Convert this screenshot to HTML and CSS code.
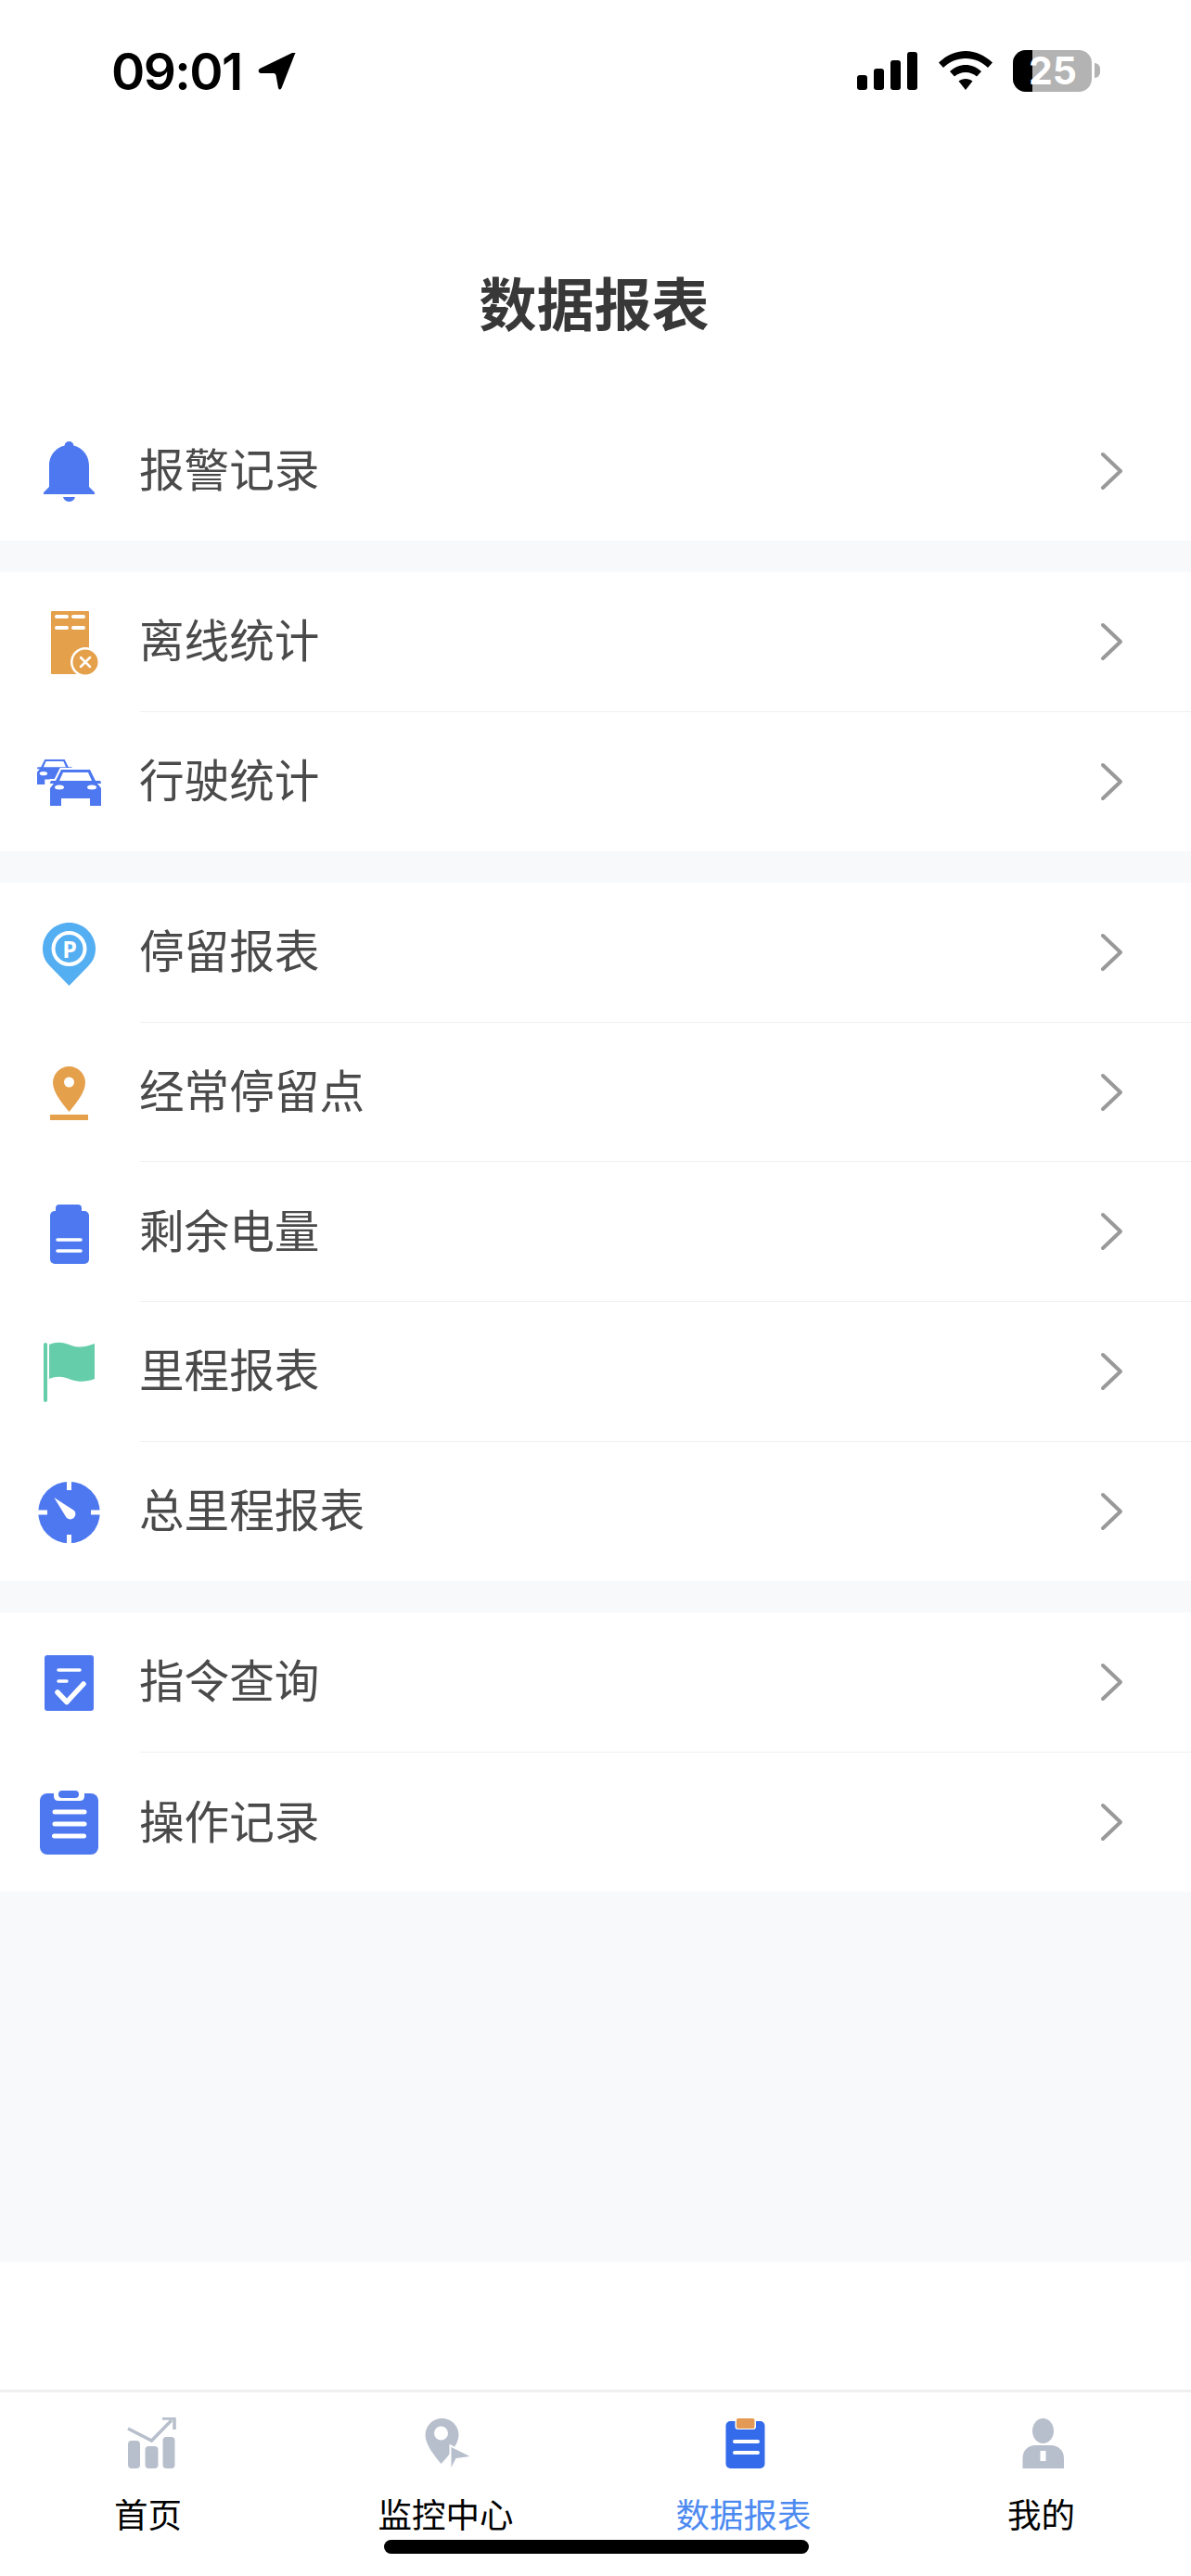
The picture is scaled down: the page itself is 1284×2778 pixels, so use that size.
FILE: index.html
```html
<!DOCTYPE html>
<html lang="zh-CN">
<head>
    <meta charset="UTF-8">
    <meta name="viewport" content="width=device-width, initial-scale=1.0">
    <title>数据报表</title>
    <link rel="stylesheet" href="styles.css">
</head>
<body>
    <div class="page">
        <div class="header">
            <div class="status">
                <div class="status-left">
                    <span class="time">09:01</span>
                    <svg class="loc-arrow" viewBox="0 0 42 40"><path d="M40 1 L25.500 38 Q23.500 41 22 38 L19.500 24 Q19 22.500 17.500 22 L2.500 22 Q-1 20 2 17 L37 0 Q42 -1 40 1 Z"/></svg>
                </div>
                <div class="status-right">
                    <svg class="signal" viewBox="0 0 65 41">
                        <rect x="0" y="25" width="11" height="16" rx="3"/>
                        <rect x="18" y="18" width="11" height="23" rx="3"/>
                        <rect x="36" y="9" width="11" height="32" rx="3"/>
                        <rect x="54" y="0" width="11" height="41" rx="3"/>
                    </svg>
                    <svg class="wifi" viewBox="0 0 58 42">
                        <path d="M29 0 C40 0 50 5 58 12.5 L53 18 C46.500 11.500 38 8 29 8 C20 8 11.500 11.500 5 18 L0 12.500 C8 5 18 0 29 0 Z"/>
                        <path d="M29 15 C35 15 41 17.500 46 22 L41 27.500 C37.500 24.500 33.500 23 29 23 C24.500 23 20.500 24.500 17 27.500 L12 22 C17 17.500 23 15 29 15 Z"/>
                        <path d="M29 30 C32 30 34.500 31 36.500 32.500 L29 42 L21.500 32.500 C23.500 31 26 30 29 30 Z"/>
                    </svg>
                    <div class="battery">
                        <div class="battery-body">
                            <div class="battery-fill"></div>
                            <span class="battery-num">25</span>
                        </div>
                        <div class="battery-nub"></div>
                    </div>
                </div>
            </div>
            <h1 class="title">数据报表</h1>
        </div>

        <div class="list">
            <div class="group">
                <div class="row">
                    <svg class="row-icon" viewBox="0 0 84 84">
                        <circle cx="42.500" cy="15" r="5" fill="#4d78f0"/>
                        <path d="M42.500 14 C31 14 21 23 21 36 V59 L15 65 V67 H70 V65 L64 59 V36 C64 23 54 14 42.500 14 Z" fill="#4d78f0"/>
                        <path d="M36 70 H49 C48 73.500 45.500 75 42.500 75 C39.500 75 37 73.500 36 70 Z" fill="#4d78f0"/>
                    </svg>
                    <div class="row-body">
                        <span class="row-label">报警记录</span>
                        <svg class="chevron" viewBox="0 0 30 44"><path d="M6 4 L25 22 L6 40"/></svg>
                    </div>
                </div>
            </div>

            <div class="group">
                <div class="row">
                    <svg class="row-icon" viewBox="0 0 84 84">
                        <rect x="23" y="9" width="41" height="68" rx="1" fill="#e5a04b"/>
                        <path d="M29 15 H40 M47 15 H58 M29 27 H40 M47 27 H58" stroke="#fff" stroke-width="4" stroke-linecap="round"/>
                        <circle cx="60" cy="64" r="16" fill="#fff"/>
                        <circle cx="60" cy="64" r="13.500" fill="#e5a04b"/>
                        <path d="M55 59 L65 69 M65 59 L55 69" stroke="#fff" stroke-width="2.500" stroke-linecap="round"/>
                    </svg>
                    <div class="row-body">
                        <span class="row-label">离线统计</span>
                        <svg class="chevron" viewBox="0 0 30 44"><path d="M6 4 L25 22 L6 40"/></svg>
                    </div>
                </div>
                <div class="row">
                    <svg class="row-icon" viewBox="0 0 84 84">
                        <g transform="translate(8 18) scale(0.69)">
                            <path d="M12 0 H43 L49 12 H54 Q55 13 55 15 H51 L55 20 V39 H43 V31 H12 V39 H0 V20 L4 15 H0 Q0 13 1 12 H6 Z" fill="#4d78f0"/>
                            <path d="M14 3 H41 L45 12 H10 Z" fill="#fff"/>
                            <ellipse cx="10" cy="22" rx="6" ry="3" fill="#fff"/>
                        </g>
                        <g transform="translate(22 29)">
                            <path d="M12 0 H43 L49 12 H54 Q55 13 55 15 H51 L55 20 V39 H43 V31 H12 V39 H0 V20 L4 15 H0 Q0 13 1 12 H6 Z" fill="#4d78f0" stroke="#fff" stroke-width="4" paint-order="stroke"/>
                            <path d="M14 3 H41 L45 12 H10 Z" fill="#fff"/>
                            <ellipse cx="10" cy="19" rx="5" ry="2.500" fill="#fff"/>
                            <ellipse cx="45" cy="19" rx="5" ry="2.500" fill="#fff"/>
                        </g>
                    </svg>
                    <div class="row-body">
                        <span class="row-label">行驶统计</span>
                        <svg class="chevron" viewBox="0 0 30 44"><path d="M6 4 L25 22 L6 40"/></svg>
                    </div>
                </div>
            </div>

            <div class="group">
                <div class="row">
                    <svg class="row-icon" viewBox="0 0 84 84">
                        <path d="M42.500 10 C58 10 71 22.500 71 38 C71 46 68 52 63 57 L42.500 78 L22 57 C17 52 14 46 14 38 C14 22.500 27 10 42.500 10 Z" fill="#54aef2"/>
                        <circle cx="42.500" cy="38" r="17" fill="none" stroke="#fff" stroke-width="4"/>
                        <text x="43" y="47.500" class="park-p">P</text>
                    </svg>
                    <div class="row-body">
                        <span class="row-label">停留报表</span>
                        <svg class="chevron" viewBox="0 0 30 44"><path d="M6 4 L25 22 L6 40"/></svg>
                    </div>
                </div>
                <div class="row">
                    <svg class="row-icon" viewBox="0 0 84 84">
                        <path d="M42.500 14 C52 14 60 22 60 31.500 C60 42 50 54 42.500 63 C35 54 25 42 25 31.500 C25 22 33 14 42.500 14 Z" fill="#e5a04b"/>
                        <circle cx="42.500" cy="31" r="5.500" fill="#fff"/>
                        <rect x="22" y="66" width="41" height="6" fill="#e5a04b"/>
                    </svg>
                    <div class="row-body">
                        <span class="row-label">经常停留点</span>
                        <svg class="chevron" viewBox="0 0 30 44"><path d="M6 4 L25 22 L6 40"/></svg>
                    </div>
                </div>
                <div class="row">
                    <svg class="row-icon" viewBox="0 0 84 84">
                        <rect x="28" y="12" width="28" height="14" rx="4" fill="#4d78f0"/>
                        <rect x="22" y="19" width="42" height="57" rx="5" fill="#4d78f0"/>
                        <path d="M30 50 H55 M30 62 H55" stroke="#fff" stroke-width="3.500" stroke-linecap="round"/>
                    </svg>
                    <div class="row-body">
                        <span class="row-label">剩余电量</span>
                        <svg class="chevron" viewBox="0 0 30 44"><path d="M6 4 L25 22 L6 40"/></svg>
                    </div>
                </div>
                <div class="row">
                    <svg class="row-icon" viewBox="0 0 84 84">
                        <rect x="15" y="11" width="4" height="64" rx="2" fill="#66cdaa"/>
                        <path d="M21 13 C30 9 38 11 45 14 C54 17 62 15 70 12 V50 C62 53 54 54 45 51 C38 48 30 46 21 50 Z" fill="#66cdaa"/>
                    </svg>
                    <div class="row-body">
                        <span class="row-label">里程报表</span>
                        <svg class="chevron" viewBox="0 0 30 44"><path d="M6 4 L25 22 L6 40"/></svg>
                    </div>
                </div>
                <div class="row">
                    <svg class="row-icon" viewBox="0 0 84 84">
                        <circle cx="42.500" cy="43" r="33.300" fill="#4d78f0"/>
                        <path d="M42.500 9 V19 M42.500 67 V77 M9 43 H19 M66 43 H76" stroke="#fff" stroke-width="5"/>
                        <path d="M26.300 27 L48 41 A5.500 5.500 0 1 1 39.500 48.500 Z" fill="#fff"/>
                    </svg>
                    <div class="row-body">
                        <span class="row-label">总里程报表</span>
                        <svg class="chevron" viewBox="0 0 30 44"><path d="M6 4 L25 22 L6 40"/></svg>
                    </div>
                </div>
            </div>

            <div class="group">
                <div class="row">
                    <svg class="row-icon" viewBox="0 0 84 84">
                        <rect x="16" y="13" width="53" height="60" rx="3" fill="#4d78f0"/>
                        <path d="M31 29 H54 M31 41 H40" stroke="#fff" stroke-width="3.500" stroke-linecap="round"/>
                        <path d="M30 53 L40 63.500 L58 44" fill="none" stroke="#fff" stroke-width="5.500" stroke-linecap="round" stroke-linejoin="round"/>
                    </svg>
                    <div class="row-body">
                        <span class="row-label">指令查询</span>
                        <svg class="chevron" viewBox="0 0 30 44"><path d="M6 4 L25 22 L6 40"/></svg>
                    </div>
                </div>
                <div class="row">
                    <svg class="row-icon" viewBox="0 0 84 84">
                        <rect x="11" y="11" width="63" height="66" rx="8" fill="#4d78f0"/>
                        <path d="M26 9 H59 V14 Q59 19 54 19 H31 Q26 19 26 14 Z" fill="#fff"/>
                        <rect x="31" y="8" width="22" height="8" rx="4" fill="#4d78f0"/>
                        <path d="M27 31 H59 M27 44 H59 M26.500 57 H58.500" stroke="#fff" stroke-width="5" stroke-linecap="round"/>
                    </svg>
                    <div class="row-body">
                        <span class="row-label">操作记录</span>
                        <svg class="chevron" viewBox="0 0 30 44"><path d="M6 4 L25 22 L6 40"/></svg>
                    </div>
                </div>
            </div>
        </div>

        <div class="spacer"></div>

        <div class="tabbar">
            <div class="tab">
                <svg class="tab-icon" viewBox="0 0 60 56">
                    <rect x="7" y="25" width="13" height="30" rx="4" fill="#b8bfcc"/>
                    <rect x="25.500" y="31" width="14" height="24" rx="4" fill="#b8bfcc"/>
                    <rect x="44.500" y="21" width="13" height="34" rx="4" fill="#b8bfcc"/>
                    <path d="M7 12 L32.500 25 L54 3" fill="none" stroke="#b8bfcc" stroke-width="3.500"/>
                    <path d="M44 1 H57 V13" fill="none" stroke="#b8bfcc" stroke-width="3.500"/>
                </svg>
                <span class="tab-label">首页</span>
            </div>
            <div class="tab">
                <svg class="tab-icon" viewBox="0 0 60 56">
                    <path d="M24.500 1 C34.500 1 42.500 9 42.500 19 C42.500 29 32 41 23.500 50 C16 41 6.500 29 6.500 19 C6.500 9 14.500 1 24.500 1 Z" fill="#b8bfcc"/>
                    <circle cx="23.500" cy="17" r="7.500" fill="#fff"/>
                    <path d="M34.500 32 L54.500 42 L39.500 44 L34.500 54 Z" fill="#b8bfcc" stroke="#fff" stroke-width="4" paint-order="stroke"/>
                </svg>
                <span class="tab-label">监控中心</span>
            </div>
            <div class="tab active">
                <svg class="tab-icon" viewBox="0 0 60 56">
                    <rect x="9.500" y="4" width="42" height="51" rx="5" fill="#336bea"/>
                    <rect x="19.500" y="0" width="22.500" height="13" rx="3" fill="#fff"/>
                    <rect x="21" y="1" width="19.500" height="11" rx="2" fill="#e39a55"/>
                    <path d="M19 26 H44 M19 38 H44" stroke="#fff" stroke-width="4" stroke-linecap="round"/>
                </svg>
                <span class="tab-label">数据报表</span>
            </div>
            <div class="tab">
                <svg class="tab-icon" viewBox="0 0 60 56">
                    <ellipse cx="30.500" cy="14.500" rx="11.500" ry="13.500" fill="#b8bfcc"/>
                    <path d="M8.500 55 V44 C8.500 35 15 30 22 30 H39 C46 30 53 35 53 44 V55 Z" fill="#b8bfcc"/>
                    <rect x="27.500" y="36" width="6" height="11" fill="#fff"/>
                </svg>
                <span class="tab-label">我的</span>
            </div>
        </div>
        <div class="home-bar"></div>
    </div>
</body>
</html>
```

FILE: styles.css
```css
* {
    box-sizing: border-box;
}
body {
    margin: 0;
    padding: 0;
    background-color: #fff;
    font-family: "Noto Sans CJK SC", "Noto Sans", sans-serif;
}
.page {
    position: relative;
    display: flex;
    flex-direction: column;
    width: 1284px;
    height: 2778px;
    overflow: hidden;
}
.header {
    height: 432.4px;
    background-color: #fff;
    flex-shrink: 0;
}
.status {
    display: flex;
    justify-content: space-between;
    align-items: center;
    height: 52px;
    margin-top: 50px;
    padding: 0 98px 0 120px;
}
.status-left {
    display: flex;
    align-items: center;
    gap: 17px;
}
.time {
    padding-top: 2px;
    font-family: Inter, "Liberation Sans", sans-serif;
    font-size: 55px;
    font-weight: 600;
    line-height: 52px;
    letter-spacing: -1.6px;
    color: #000;
}
.loc-arrow {
    width: 42px;
    height: 40px;
    margin-top: 2px;
    fill: #000;
}
.status-right {
    display: flex;
    align-items: center;
}
.signal {
    width: 65px;
    height: 41px;
    margin-right: 23px;
}
.wifi {
    width: 58px;
    height: 42px;
    margin-right: 22px;
}
.battery {
    display: flex;
    align-items: center;
    gap: 3px;
}
.battery-body {
    position: relative;
    width: 85px;
    height: 45px;
    border-radius: 14px;
    background-color: #b3b3b3;
}
.battery-fill {
    width: 21px;
    height: 100%;
    border-radius: 14px 0 0 14px;
    background-color: #000;
}
.battery-num {
    position: absolute;
    top: 0;
    left: 0;
    width: 85px;
    padding-left: 1px;
    font-family: Inter, "Liberation Sans", sans-serif;
    font-size: 41px;
    font-weight: 700;
    line-height: 45px;
    text-align: center;
    color: #fff;
}
.battery-nub {
    width: 6px;
    height: 16px;
    border-radius: 0 8px 8px 0;
    background-color: #b3b3b3;
}
.title {
    margin: 192px 0 0;
    padding-right: 3px;
    font-size: 62px;
    font-weight: 700;
    line-height: 62px;
    text-align: center;
    color: #383838;
}
.list {
    display: flex;
    flex-direction: column;
    gap: 34px;
    height: 2006.6px;
    background-color: #f8f9fb;
    flex-shrink: 0;
}
.group {
    background-color: #fff;
}
.row {
    display: flex;
    align-items: center;
    height: 150.6px;
    padding-left: 32px;
}
.row-icon {
    width: 84px;
    height: 84px;
    flex-shrink: 0;
}
.row-body {
    display: flex;
    align-items: center;
    justify-content: space-between;
    flex: 1;
    height: 100%;
    margin-left: 35px;
    padding-right: 71px;
    border-bottom: 1px solid #f0f0f1;
}
.row:last-child .row-body {
    border-bottom: none;
}
.row-label {
    margin-bottom: 7px;
    margin-left: -1px;
    font-size: 48.6px;
    line-height: 60px;
    color: #4a4a4a;
}
.chevron {
    width: 30px;
    height: 44px;
    fill: none;
    stroke: #999;
    stroke-width: 4;
    stroke-linecap: round;
    stroke-linejoin: round;
}
.park-p {
    font-family: "Open Sans", sans-serif;
    font-size: 25px;
    font-weight: 700;
    text-anchor: middle;
    fill: #fff;
}
.spacer {
    flex: 1;
    background-color: #fff;
}
.tabbar {
    display: flex;
    height: 201px;
    border-top: 3px solid #eeeff0;
    background-color: #fff;
}
.tab {
    display: flex;
    flex-direction: column;
    align-items: center;
    width: 25%;
    padding-top: 27px;
}
.tab-icon {
    width: 60px;
    height: 56px;
}
.tab-label {
    margin-top: 21px;
    margin-right: 2px;
    font-size: 36.5px;
    line-height: 54px;
    color: #000;
}
.tab.active .tab-label {
    color: #4d8af0;
}
.home-bar {
    position: absolute;
    left: 414px;
    top: 2739px;
    width: 458px;
    height: 15px;
    border-radius: 8px;
    background-color: #000;
}
```
